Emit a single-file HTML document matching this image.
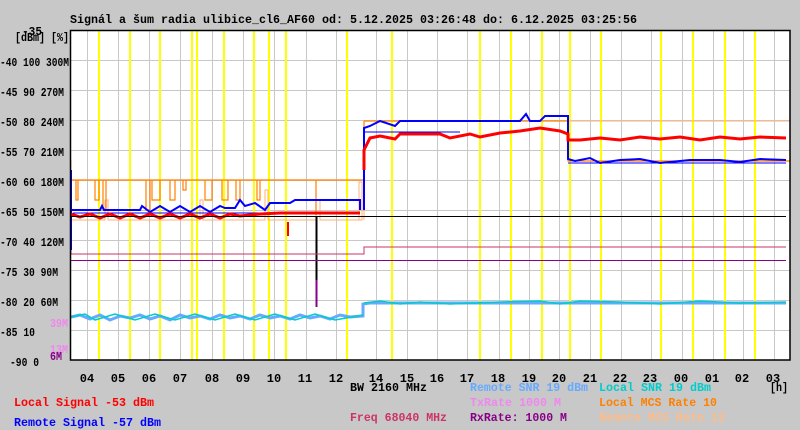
<!DOCTYPE html>
<html><head><meta charset="utf-8"><style>
html,body{margin:0;padding:0;background:#c8c8c8;}
svg{display:block;}
text{font-family:"Liberation Mono",monospace;font-weight:bold;}
</style></head><body>
<svg width="800" height="430" viewBox="0 0 800 430" xmlns="http://www.w3.org/2000/svg">
<rect width="800" height="430" fill="#c8c8c8"/>
<rect x="70" y="30" width="720" height="330" fill="#fff"/>
<g stroke="#c8c8c8" stroke-width="1">
<path d="M70 60.5H790M70 90.5H790M70 120.5H790M70 150.5H790M70 180.5H790M70 210.5H790M70 240.5H790M70 270.5H790M70 300.5H790M70 330.5H790"/>
<path d="M87.5 30V360M118.5 30V360M149.5 30V360M180.5 30V360M212.5 30V360M243.5 30V360M274.5 30V360M306.5 30V360M336.5 30V360M376.5 30V360M407.5 30V360M437.5 30V360M467.5 30V360M499.5 30V360M529.5 30V360M559.5 30V360M590.5 30V360M621.5 30V360M651.5 30V360M682.5 30V360M713.5 30V360M743.5 30V360M774.5 30V360"/>
</g>
<g stroke="#ffff00" stroke-width="2">
<path d="M99 30V360M130 30V360M160 30V360M192 30V360M197 30V360M224 30V360M254 30V360M269 30V360M286 30V360M347 30V360M392 30V360M480 30V360M511 30V360M542 30V360M570 30V360M601 30V360M661 30V360M693 30V360M725 30V360M755 30V360"/>
</g>
<path d="M71 160V240M71 220H105V200H108V220H200V200H203V220H265V190H268V220H316V200H320V220H359V182H362V220H359M364 220V121H790" fill="none" stroke="#ffb07a" stroke-width="1"/>
<path d="M71 180H364M76 180V200H78V180M95 180V200H99V180M103 180V210H106V180M146 180V210H150V180M152 180V200H160V180M170 180V200H175V180M183 180V190H186V180M205 180V200H212V180M222 180V200H228V180M236 180V200H240V180M257 180V200H260V180M316 180V215M364 180V121M364 121H568V161H790" fill="none" stroke="#ff8000" stroke-width="1.2"/>
<path d="M71 170V250M71 210H100L102 206L104 210H140L142 206L150 212L160 206L170 212L180 206L190 212L200 206L210 212L220 206L225 208H235L240 200L245 206L255 203L265 210L270 203H290L295 200L310 200H360V210M364 210V128L370 126L380 121L395 126L400 121H520L526 114L530 121H540L545 116H568V159L575 161L590 158L600 163L620 160L640 159L660 163L690 160L720 160L740 162L760 159L786 160" fill="none" stroke="#0000ff" stroke-width="2"/>
<path d="M73 213H360M364 132H460M568 163H786" stroke="#0000ff" stroke-width="1" fill="none"/>
<path d="M71 214L80 217L90 214L100 218L110 214L120 218L130 214L140 218L150 214L160 218L170 214L180 218L190 214L200 218L210 214L220 218L230 214L240 216L260 214L280 213H360M364 170V150L370 138L380 136L395 139L400 134H440L450 138L470 134L480 137L500 133L520 131L540 128L560 131L568 134V140H580L600 138L620 140L640 137L660 139L680 137L700 140L720 137L740 139L760 137L786 138" fill="none" stroke="#ff0000" stroke-width="3"/>
<path d="M288 222V236" stroke="#ff0000" stroke-width="2"/>
<path d="M71 216.5H786" stroke="#000" stroke-width="1"/>
<path d="M316.5 216V280" stroke="#000" stroke-width="2"/>
<path d="M316.5 280V307" stroke="#880088" stroke-width="2"/>
<path d="M71 250V254H364V247H786" fill="none" stroke="#cc3366" stroke-width="1"/>
<path d="M71 260.5H786" stroke="#880088" stroke-width="1"/>
<path d="M71 317L80 315L90 319L100 315L110 320L120 316L130 318L140 315L150 319L160 316L170 320L180 315L190 318L200 316L210 319L220 315L230 318L240 316L250 319L260 315L270 318L280 316L290 319L300 315L310 318L320 316L330 319L340 315L350 317L363 316V304L370 303H786" fill="none" stroke="#66aaff" stroke-width="3"/>
<path d="M71 317L85 314L95 320L115 314L135 320L155 314L175 320L195 314L215 320L235 314L255 320L275 314L295 320L315 314L335 320L363 315M364 303L380 301L400 304L420 302L450 304L500 302L540 301L560 304L580 301L620 302L660 304L700 301L740 303L786 302" fill="none" stroke="#00cccc" stroke-width="1.5"/>
<rect x="70.5" y="30.5" width="719.5" height="329.5" fill="none" stroke="#000" stroke-width="1.5"/>
<g font-size="12" fill="#000" lengthAdjust="spacingAndGlyphs">
<text x="70" y="23" textLength="567" lengthAdjust="spacingAndGlyphs">Signál a šum radia ulibice_cl6_AF60 od: 5.12.2025 03:26:48 do: 6.12.2025 03:25:56</text>
<text x="22" y="35" textLength="20" lengthAdjust="spacingAndGlyphs">-35</text>
<text x="15" y="41" textLength="54" lengthAdjust="spacingAndGlyphs">[dBm] [%]</text>
<text x="0" y="66" textLength="69" lengthAdjust="spacingAndGlyphs">-40 100 300M</text>
<text x="0" y="96" textLength="64" lengthAdjust="spacingAndGlyphs">-45 90 270M</text>
<text x="0" y="126" textLength="64" lengthAdjust="spacingAndGlyphs">-50 80 240M</text>
<text x="0" y="156" textLength="64" lengthAdjust="spacingAndGlyphs">-55 70 210M</text>
<text x="0" y="186" textLength="64" lengthAdjust="spacingAndGlyphs">-60 60 180M</text>
<text x="0" y="216" textLength="64" lengthAdjust="spacingAndGlyphs">-65 50 150M</text>
<text x="0" y="246" textLength="64" lengthAdjust="spacingAndGlyphs">-70 40 120M</text>
<text x="0" y="276" textLength="58" lengthAdjust="spacingAndGlyphs">-75 30 90M</text>
<text x="0" y="306" textLength="58" lengthAdjust="spacingAndGlyphs">-80 20 60M</text>
<text x="0" y="336" textLength="35" lengthAdjust="spacingAndGlyphs">-85 10</text>
<text x="10" y="366" textLength="29" lengthAdjust="spacingAndGlyphs">-90 0</text>
<text x="50" y="327" fill="#ee88ee" textLength="18" lengthAdjust="spacingAndGlyphs">39M</text>
<text x="50" y="353" fill="#ee88ee" textLength="18" lengthAdjust="spacingAndGlyphs">13M</text>
<text x="50" y="360" fill="#880088" textLength="12" lengthAdjust="spacingAndGlyphs">6M</text>
</g>
<g font-size="12" fill="#000" text-anchor="middle">
<text x="87" y="382">04</text><text x="118" y="382">05</text><text x="149" y="382">06</text><text x="180" y="382">07</text><text x="212" y="382">08</text><text x="243" y="382">09</text><text x="274" y="382">10</text><text x="305" y="382">11</text><text x="336" y="382">12</text><text x="376" y="382">14</text><text x="407" y="382">15</text><text x="437" y="382">16</text><text x="467" y="382">17</text><text x="498" y="382">18</text><text x="529" y="382">19</text><text x="559" y="382">20</text><text x="590" y="382">21</text><text x="620" y="382">22</text><text x="650" y="382">23</text><text x="681" y="382">00</text><text x="712" y="382">01</text><text x="742" y="382">02</text><text x="773" y="382">03</text>
</g>
<g font-size="12">
<text x="350" y="391" fill="#000" textLength="77" lengthAdjust="spacingAndGlyphs">BW 2160 MHz</text>
<text x="470" y="391" fill="#66aaff" textLength="118" lengthAdjust="spacingAndGlyphs">Remote SNR 19 dBm</text>
<text x="599" y="391" fill="#00cccc" textLength="112" lengthAdjust="spacingAndGlyphs">Local SNR 19 dBm</text>
<text x="770" y="391" fill="#000" textLength="18" lengthAdjust="spacingAndGlyphs">[h]</text>
<text x="470" y="406" fill="#ee88ee" textLength="91" lengthAdjust="spacingAndGlyphs">TxRate 1000 M</text>
<text x="599" y="406" fill="#ff8000" textLength="118" lengthAdjust="spacingAndGlyphs">Local MCS Rate 10</text>
<text x="350" y="421" fill="#cc3366" textLength="97" lengthAdjust="spacingAndGlyphs">Freq 68040 MHz</text>
<text x="470" y="421" fill="#880088" textLength="97" lengthAdjust="spacingAndGlyphs">RxRate: 1000 M</text>
<text x="599" y="421" fill="#ffbb88" textLength="126" lengthAdjust="spacingAndGlyphs">Remote MCS Rate 12</text>
<text x="14" y="406" fill="#ff0000" textLength="140" lengthAdjust="spacingAndGlyphs">Local Signal -53 dBm</text>
<text x="14" y="426" fill="#0000ff" textLength="147" lengthAdjust="spacingAndGlyphs">Remote Signal -57 dBm</text>
</g>
</svg>
</body></html>
